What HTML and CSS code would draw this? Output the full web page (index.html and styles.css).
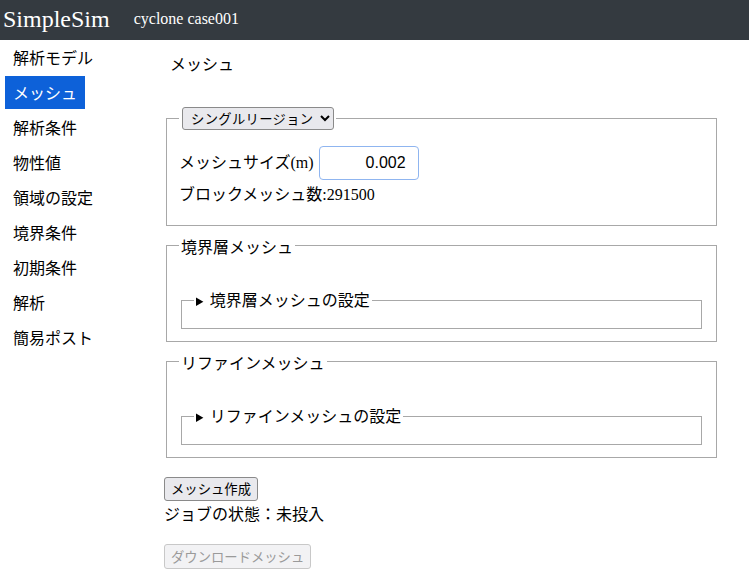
FILE: index.html
```html
<!DOCTYPE html>
<html lang="ja">
<head>
<meta charset="utf-8">
<title>SimpleSim</title>
<link rel="stylesheet" href="styles.css">
</head>
<body>
<header class="topbar">
  <span class="brand">SimpleSim</span>
  <span class="case">cyclone case001</span>
</header>
<div class="layout">
  <nav class="sidebar">
    <a class="nav-item">解析モデル</a>
    <a class="nav-item active">メッシュ</a>
    <a class="nav-item">解析条件</a>
    <a class="nav-item">物性値</a>
    <a class="nav-item">領域の設定</a>
    <a class="nav-item">境界条件</a>
    <a class="nav-item">初期条件</a>
    <a class="nav-item">解析</a>
    <a class="nav-item">簡易ポスト</a>
  </nav>
  <main class="main">
    <div class="page-title">メッシュ</div>
    <fieldset class="group first">
      <legend><select class="mode"><option>シングルリージョン</option></select></legend>
      <div class="size-row">
        <span>メッシュサイズ(m)</span>
        <input class="size-input" type="text" value="0.002">
      </div>
      <div class="count">ブロックメッシュ数:291500</div>
    </fieldset>
    <fieldset class="group sub">
      <legend>境界層メッシュ</legend>
      <div class="spacer"></div>
      <fieldset class="inner">
        <legend><details><summary>境界層メッシュの設定</summary></details></legend>
      </fieldset>
    </fieldset>
    <fieldset class="group sub last">
      <legend>リファインメッシュ</legend>
      <div class="spacer"></div>
      <fieldset class="inner">
        <legend><details><summary>リファインメッシュの設定</summary></details></legend>
      </fieldset>
    </fieldset>
    <button class="btn" type="button">メッシュ作成</button>
    <div class="status">ジョブの状態：未投入</div>
    <button class="btn download" type="button" disabled>ダウンロードメッシュ</button>
  </main>
</div>
</body>
</html>
```

FILE: styles.css
```css
body {
  margin: 0;
  font-family: "Liberation Serif", "Noto Sans CJK JP", serif;
  font-size: 16px;
  color: #000;
  background: #fff;
}

.topbar {
  height: 40px;
  background: #343a40;
  color: #fff;
  display: flex;
  align-items: center;
  padding-left: 3px;
}

.brand {
  font-size: 24px;
  line-height: 28px;
  margin-top: -2px;
}

.case {
  font-size: 16px;
  margin-left: 24px;
  margin-top: -2px;
}

.layout {
  display: flex;
}

.sidebar {
  width: 159px;
  padding-left: 5px;
  padding-top: 1px;
  display: flex;
  flex-direction: column;
  align-items: flex-start;
  gap: 2px;
  flex-shrink: 0;
}

.nav-item {
  display: block;
  padding: 4px 8px;
  line-height: 25px;
  font-family: "Noto Sans CJK JP", sans-serif;
  color: #000;
}

.nav-item.active {
  background: #0d61d9;
  color: #fff;
}

.main {
  width: 555px;
  padding-top: 11px;
}

.page-title {
  font-family: "Noto Sans CJK JP", sans-serif;
  line-height: 24px;
  padding-left: 6px;
  margin-bottom: 32px;
}

.group {
  margin: 0 2px 8px;
  border: 1px solid #a8a8a8;
  padding: 5.6px 12px 10px;
}

.group.sub {
  padding-bottom: 12px;
}

.group.last {
  margin-bottom: 19px;
}

.group legend {
  padding: 0 2px;
  font-family: "Noto Sans CJK JP", sans-serif;
  line-height: 24px;
}

.group.first legend {
  line-height: normal;
  padding-left: 3px;
}

.mode {
  font-family: "Noto Sans CJK JP", sans-serif;
  font-size: 13.33px;
  letter-spacing: 0.3px;
  height: 23px;
  padding: 0 3px 0 4px;
  border: 1px solid #8a8a8a;
  border-radius: 3px;
  background: #e9e9ed;
  color: #000;
  display: block;
}

.size-row {
  margin-top: 10px;
  display: flex;
  align-items: center;
  gap: 5px;
  line-height: 24px;
}

.size-input {
  width: 86px;
  height: 32px;
  box-sizing: content-box;
  padding: 0 12px 0 0;
  border: 1px solid #8fb5f0;
  border-radius: 4px;
  text-align: right;
  font-family: "Liberation Sans", sans-serif;
  font-size: 16px;
  outline: none;
}

.count {
  margin-top: 3px;
  margin-bottom: 8px;
  line-height: 24px;
}

.spacer {
  height: 24px;
}

.inner {
  margin: 0 2px;
  border: 1px solid #a8a8a8;
  padding: 5.6px 12px 9px;
}

.inner legend {
  padding: 0 2px;
}

.inner summary {
  font-family: "Noto Sans CJK JP", sans-serif;
  font-size: 16px;
  line-height: 24px;
  cursor: pointer;
}

.inner summary::marker {
  font-size: 13px;
}

.btn {
  font-family: "Noto Sans CJK JP", sans-serif;
  font-size: 13.33px;
  height: 24px;
  padding: 0 6px;
  border: 1px solid #8a8a8a;
  border-radius: 3px;
  background: #e9e9ed;
  color: #000;
  display: block;
}

.btn.download {
  margin-top: 19px;
  height: 25px;
  color: #9a9a9a;
  border-color: #c8c8c8;
  background: #f2f2f4;
}

.status {
  font-family: "Noto Sans CJK JP", sans-serif;
  line-height: 24px;
}
```
